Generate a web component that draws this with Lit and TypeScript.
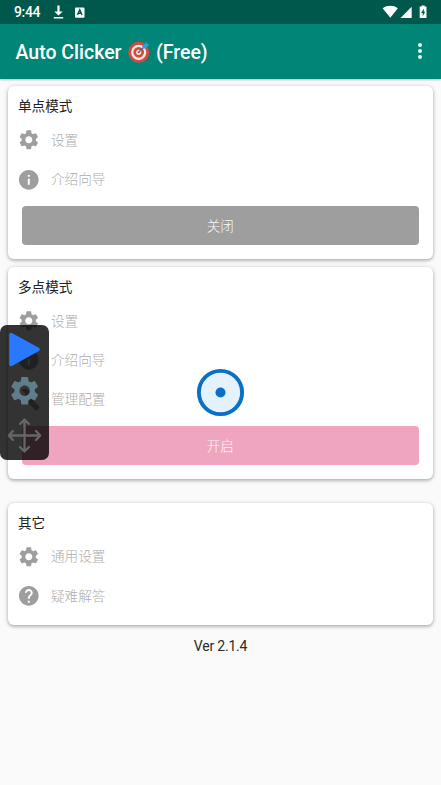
import { LitElement, html, css } from "lit";
import { customElement, property } from "lit/decorators.js";

const GEAR =
  "M19.14 12.94c.04-.3.06-.61.06-.94 0-.32-.02-.64-.07-.94l2.03-1.58c.18-.14.23-.41.12-.61l-1.92-3.32c-.12-.22-.37-.29-.59-.22l-2.39.96c-.5-.38-1.03-.7-1.62-.94l-.36-2.54c-.04-.24-.24-.41-.48-.41h-3.84c-.24 0-.43.17-.47.41l-.36 2.54c-.59.24-1.13.57-1.62.94l-2.39-.96c-.22-.08-.47 0-.59.22L2.74 8.87c-.12.21-.08.47.12.61l2.03 1.58c-.05.3-.09.63-.09.94s.02.64.07.94l-2.03 1.58c-.18.14-.23.41-.12.61l1.92 3.32c.12.22.37.29.59.22l2.39-.96c.5.38 1.03.7 1.62.94l.36 2.54c.05.24.24.41.48.41h3.84c.24 0 .44-.17.47-.41l.36-2.54c.59-.24 1.13-.56 1.62-.94l2.39.96c.22.08.47 0 .59-.22l1.92-3.32c.12-.22.07-.47-.12-.61l-2.01-1.58zM12 15.6c-1.98 0-3.6-1.62-3.6-3.6s1.62-3.6 3.6-3.6 3.6 1.62 3.6 3.6-1.62 3.6-3.6 3.6z";

const ICONS: Record<string, string> = {
  settings: GEAR,
  info: "M12 2C6.48 2 2 6.48 2 12s4.48 10 10 10 10-4.48 10-10S17.52 2 12 2zm1 15h-2v-6h2v6zm0-8h-2V7h2v2z",
  help: "M12 2C6.48 2 2 6.48 2 12s4.48 10 10 10 10-4.48 10-10S17.52 2 12 2zm1 17h-2v-2h2v2zm2.07-7.75l-.9.92C13.45 12.9 13 13.5 13 15h-2v-.5c0-1.1.45-2.1 1.17-2.83l1.24-1.26c.37-.36.59-.86.59-1.41 0-1.1-.9-2-2-2s-2 .9-2 2H8c0-2.21 1.79-4 4-4s4 1.79 4 4c0 .88-.36 1.68-.93 2.25z",
  build: "M22.7 19l-9.1-9.1c.9-2.3.4-5-1.5-6.9-2-2-5-2.4-7.4-1.3L9 6 6 9 1.6 4.7C.4 7.1.9 10.1 2.9 12.1c1.9 1.9 4.6 2.4 6.9 1.5l9.1 9.1c.4.4 1 .4 1.4 0l2.3-2.3c.5-.4.5-1.1.1-1.4z",
};

interface Item {
  icon: string;
  label: string;
}

@customElement("mode-card")
export class ModeCard extends LitElement {
  @property() heading = "";
  @property({ attribute: false }) items: Item[] = [];
  @property() action = "";
  @property() tone = "grey";

  static styles = css`
    :host {
      display: block;
      background: #fff;
      border-radius: 6px;
      box-shadow: 0 1px 4px rgba(0, 0, 0, 0.28), 0 2px 3px rgba(0, 0, 0, 0.1);
      padding-bottom: 14px;
    }
    :host([compact]) {
      padding-bottom: 10px;
    }
    .heading {
      height: 34.5px;
      line-height: 40px;
      padding-left: 10px;
      font-size: 13.6px;
      color: #212121;
    }
    .item {
      display: flex;
      align-items: center;
      height: 39.2px;
      padding-left: 9.2px;
      gap: 10.2px;
      font-size: 13.6px;
      font-weight: 300;
      color: #adadad;
    }
    .label {
      line-height: 20px;
      padding-bottom: 0.4px;
    }
    .icon {
      width: 23.6px;
      height: 23.6px;
      fill: #9e9e9e;
    }
    .action {
      display: flex;
      align-items: center;
      justify-content: center;
      height: 39px;
      box-sizing: border-box;
      padding-bottom: 1.4px;
      margin: 7px 14px 0 13.5px;
      border-radius: 4px;
      font-size: 13.6px;
      color: #f7f7f7;
      font-weight: 300;
      background: #9e9e9e;
    }
    .action.pink {
      background: #efa5c0;
    }
  `;

  render() {
    return html`
      <div class="heading">${this.heading}</div>
      ${this.items.map(
        (it) => html`<div class="item">
          <svg class="icon" viewBox="0 0 24 24"><path d=${ICONS[it.icon]} /></svg>
          <span class="label">${it.label}</span>
        </div>`
      )}
      ${this.action ? html`<div class="action ${this.tone}">${this.action}</div>` : ""}
    `;
  }
}

@customElement("app-root")
export class AppRoot extends LitElement {
  static styles = css`
    :host {
      display: block;
      position: relative;
      height: 785px;
      overflow: hidden;
      background: #fafafa;
      font-family: Roboto, "Noto Sans CJK SC", sans-serif;
    }
    .status {
      display: flex;
      align-items: center;
      height: 24px;
      box-sizing: border-box;
      padding: 0 12px 0 14px;
      background: #00574b;
      color: #fff;
      font-size: 14px;
      font-weight: 500;
      letter-spacing: -0.35px;
    }
    .clock {
      width: 39px;
      line-height: 24px;
    }
    .status svg {
      display: block;
      fill: #fff;
    }
    .alpha {
      margin-left: 11px;
    }
    .radios {
      display: flex;
      align-items: center;
      margin-left: auto;
    }
    .bar {
      display: flex;
      align-items: center;
      height: 54.5px;
      box-sizing: border-box;
      padding: 1.5px 17px 0 15.5px;
      background: #008577;
      color: #fff;
      font-size: 19.5px;
      font-weight: 500;
      box-shadow: 0 1px 2px rgba(0, 0, 0, 0.25);
    }
    .target {
      width: 22px;
      height: 22px;
      margin: 0 6px 0 6.5px;
    }
    .more {
      display: flex;
      flex-direction: column;
      gap: 2px;
      margin-left: auto;
      margin-right: 2.5px;
      margin-top: -1.5px;
    }
    .more i {
      width: 4px;
      height: 4px;
      border-radius: 50%;
      background: #dcfbf5;
    }
    .cards {
      display: flex;
      flex-direction: column;
      gap: 8px;
      padding: 7.6px 8px 0;
    }
    .last {
      margin-top: 15.5px;
    }
    .version {
      margin-top: 13px;
      text-align: center;
      font-size: 14px;
      letter-spacing: -0.2px;
      line-height: 17px;
      color: #2b2b2b;
    }
    .panel {
      position: absolute;
      left: 0;
      top: 325px;
      width: 49px;
      height: 135px;
      border-radius: 7px;
      background: rgba(0, 0, 0, 0.8);
    }
    .panel svg,
    .tap svg {
      display: block;
    }
    .tap {
      position: absolute;
      left: 196px;
      top: 368px;
    }
  `;

  render() {
    return html`
      <div class="status">
        <span class="clock">9:44</span>
        <svg width="11" height="14" viewBox="0 0 11 14">
          <path d="M4.4 .5h2.2v6H9.7L5.5 10.4 1.3 6.500H4.400zM.8 12h9.400v1.500H.8z" />
        </svg>
        <svg class="alpha" width="10" height="11" viewBox="0 0 10 11">
          <rect width="9.500" height="10.300" rx="1" y=".4" />
          <path d="M2.500 7.900L4.750 2.700 7 7.900M3.300 6.300h2.900" fill="none" stroke="#00574b" stroke-width="1.400" />
        </svg>
        <div class="radios">
          <svg width="47" height="14" viewBox="0 0 47 14">
            <path d="M.6 3.200C4.800-.1 11.700-.1 15.900 3.200L8.300 12.700z" />
            <path d="M29.700 1.700V12.900H18.500z" />
            <path
              fill-rule="evenodd"
              d="M37.700 1.500h1.900V.4h3v1.100h1.900V13.100h-6.800zM41.800 3.500L39.100 7.900h1.600v3.300L43.200 6.700h-1.400z"
            />
          </svg>
        </div>
      </div>
      <div class="bar">
        <span>Auto Clicker</span>
        <svg class="target" viewBox="0 0 22 22">
          <circle cx="10.700" cy="11.300" r="10.500" fill="#d6493f" />
          <circle cx="10.700" cy="11.300" r="6.500" fill="none" stroke="#f6e9e7" stroke-width="2.300" />
          <circle cx="10.700" cy="11.300" r="2.600" fill="#f6e9e7" />
          <circle cx="10.700" cy="11.300" r="1" fill="#d6493f" />
          <path d="M10.700 11.300L17 5" stroke="#5b6f88" stroke-width="1.300" />
          <path d="M14.300 4.900L18.700.6 18.900 3.100 21.700 3.500 17.300 7.600 14.500 7.500z" fill="#2f9fd2" />
        </svg>
        <span>(Free)</span>
        <div class="more"><i></i><i></i><i></i></div>
      </div>
      <div class="cards">
        <mode-card
          heading="单点模式"
          action="关闭"
          .items=${[
            { icon: "settings", label: "设置" },
            { icon: "info", label: "介绍向导" },
          ]}
        ></mode-card>
        <mode-card
          heading="多点模式"
          action="开启"
          tone="pink"
          .items=${[
            { icon: "settings", label: "设置" },
            { icon: "info", label: "介绍向导" },
            { icon: "build", label: "管理配置" },
          ]}
        ></mode-card>
        <mode-card
          class="last"
          compact
          heading="其它"
          .items=${[
            { icon: "settings", label: "通用设置" },
            { icon: "help", label: "疑难解答" },
          ]}
        ></mode-card>
      </div>
      <div class="version">Ver 2.1.4</div>

      <div class="panel">
        <svg width="49" height="135" viewBox="0 0 49 135">
          <path d="M11 9.500L38 24.400 11 39.500z" fill="#2979ff" stroke="#2979ff" stroke-width="3.500" stroke-linejoin="round" />
          <g transform="translate(7.500 48.500) scale(1.430)" fill="#607d8b">
            <path d=${GEAR} />
          </g>
          <g fill="none" stroke="#666" stroke-width="2.300" stroke-linecap="round" stroke-linejoin="round">
            <path d="M24.500 95v31M9.500 110.500h30M20 99l4.500-4.500 4.500 4.500M20 122l4.500 4.500 4.500-4.500M13 106L8.800 110.500l4.200 4.500M36 106l4.200 4.500-4.200 4.500" />
          </g>
        </svg>
      </div>
      <div class="tap">
        <svg width="49" height="49" viewBox="0 0 49 49">
          <circle cx="24.500" cy="24.500" r="21.600" fill="#e3f2fd" stroke="#0a70c5" stroke-width="3.900" />
          <circle cx="24.500" cy="24.500" r="5" fill="#0a70c5" />
        </svg>
      </div>
    `;
  }
}
